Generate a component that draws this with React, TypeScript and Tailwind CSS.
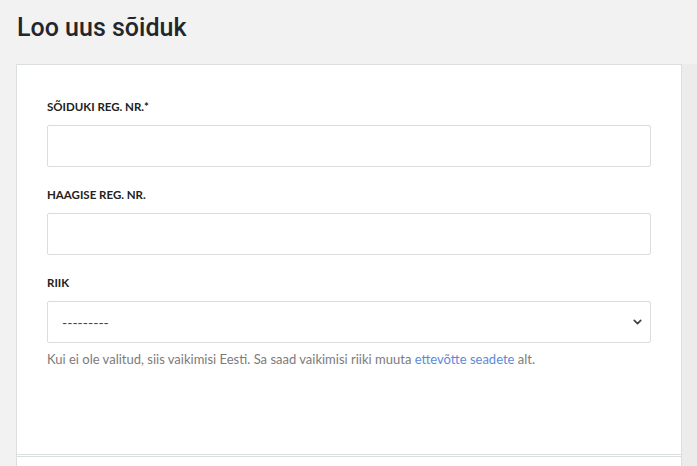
import { ChevronDown } from 'lucide-react';

function Field({ label, children }: { label: string; children: React.ReactNode }) {
  return (
    <div className="mb-[20px]">
      <label className="mb-[10px] block text-[11.5px] font-bold uppercase leading-[16px] text-[#222]">
        {label}
      </label>
      {children}
    </div>
  );
}

export default function App() {
  return (
    <div
      className="min-h-screen bg-[#f2f2f2]"
      style={{ fontFamily: 'Lato, "Open Sans", sans-serif' }}
    >
      <h1
        className="px-[17px] pt-[11px] pb-[19px] text-[25px] font-medium leading-[34px] text-[#23262b]"
        style={{ fontFamily: 'Roboto, "Liberation Sans", sans-serif' }}
      >
        Loo uus sõiduk
      </h1>
      <div className="flex pl-4">
        <div className="w-[666px] border border-b-0 border-[#dcdfe0] bg-white">
          <div className="border-b border-[#dcdfe0] px-[30px] pt-[34px] pb-[85px]">
            <Field label="Sõiduki reg. nr.*">
              <input className="block h-[42px] w-full rounded-[2px] border border-[#dcdcdc] px-[14px] text-sm outline-none" />
            </Field>
            <Field label="Haagise reg. nr.">
              <input className="block h-[42px] w-full rounded-[2px] border border-[#dcdcdc] px-[14px] text-sm outline-none" />
            </Field>
            <div>
              <label className="mb-[10px] block text-[11.5px] font-bold uppercase leading-[16px] text-[#222]">
                Riik
              </label>
              <div className="relative">
                <select className="block h-[42px] w-full appearance-none rounded-[2px] border border-[#dcdcdc] bg-white px-[14px] text-[14px] text-[#444] outline-none">
                  <option>---------</option>
                </select>
                <ChevronDown
                  size={13}
                  strokeWidth={3.2}
                  className="pointer-events-none absolute top-1/2 right-[7px] -translate-y-1/2 text-[#444]"
                />
              </div>
              <p className="mt-[6px] text-[13px] leading-[20px] text-[#7b7b7b]">
                Kui ei ole valitud, siis vaikimisi Eesti. Sa saad vaikimisi riiki muuta{' '}
                <a href="#" className="text-[#5b8ad9]">
                  ettevõtte seadete
                </a>{' '}
                alt.
              </p>
            </div>
          </div>
          <div className="mt-px h-[20px] border-t border-[#dcdfe0]" />
        </div>
        <div className="flex-1 bg-[#ececec]" />
      </div>
    </div>
  );
}
